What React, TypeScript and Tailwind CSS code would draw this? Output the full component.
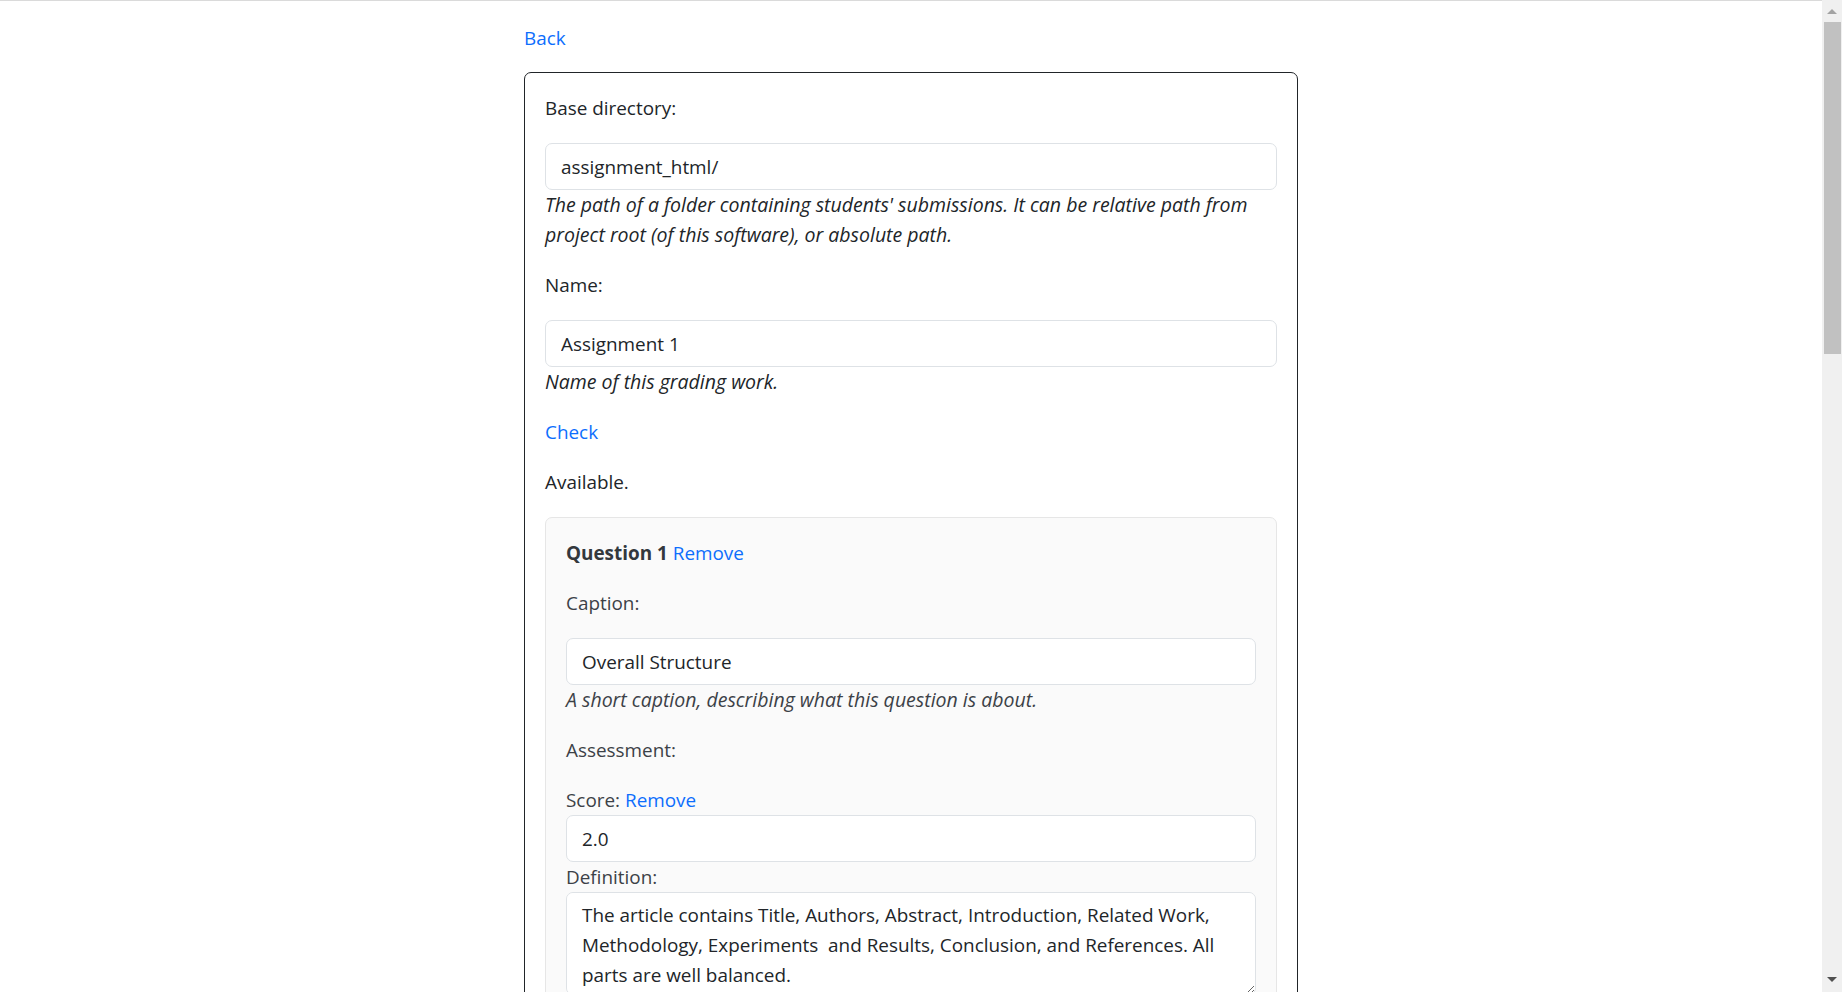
import React from "react";

const font = { fontFamily: '"Open Sans", "Noto Sans", sans-serif' };

function Field({
  label,
  value,
  help,
  labelClass = "text-[#212529]",
  helpClass = "text-[#212529]",
}: {
  label: string;
  value: string;
  help: string;
  labelClass?: string;
  helpClass?: string;
}) {
  return (
    <div className="mb-5">
      <div className={`mb-5 leading-[30px] ${labelClass}`}>{label}</div>
      <input
        readOnly
        value={value}
        className="block h-[47px] w-full rounded-[7px] border border-[#dee2e6] bg-white px-[15px] leading-[30px] text-[#212529] outline-none"
      />
      <div className={`text-[19.5px] italic leading-[30px] ${helpClass}`}>{help}</div>
    </div>
  );
}

export default function App() {
  return (
    <div
      className="flex h-[992px] w-full overflow-hidden bg-white text-[18.9px] text-[#212529]"
      style={font}
    >
      <main className="flex-1 overflow-hidden border-t border-[#dadada]">
        <div className="mx-auto w-[774px] pt-[22px]">
          <a className="mb-[19px] block w-fit leading-[30px] text-[#0d6efd]" href="#">
            Back
          </a>
          <div className="rounded-[7px] border border-[#212529] p-5">
            <Field
              label="Base directory:"
              value="assignment_html/"
              help="The path of a folder containing students' submissions. It can be relative path from project root (of this software), or absolute path."
            />
            <Field
              label="Name:"
              value="Assignment 1"
              help="Name of this grading work."
            />
            <div className="mb-5 leading-[30px]">
              <a href="#" className="text-[#0d6efd]">
                Check
              </a>
            </div>
            <div className="mb-5 leading-[30px]">Available.</div>

            <div className="rounded-[7px] border border-[#e6e6e6] bg-[#fafafa] p-5 text-[#3c4147]">
              <div className="mb-5 leading-[30px]">
                <span className="font-bold text-[#33383d]">Question 1</span>{" "}
                <a href="#" className="text-[#0d6efd]">
                  Remove
                </a>
              </div>
              <Field
                label="Caption:"
                value="Overall Structure"
                help="A short caption, describing what this question is about."
                labelClass="text-[#3c4147]"
                helpClass="text-[#3c4147]"
              />
              <div className="mb-5 leading-[30px]">Assessment:</div>
              <div className="leading-[30px]">
                Score:{" "}
                <a href="#" className="text-[#0d6efd]">
                  Remove
                </a>
              </div>
              <input
                readOnly
                value="2.0"
                className="block h-[47px] w-full rounded-[7px] border border-[#dee2e6] bg-white px-[15px] leading-[30px] text-[#212529] outline-none"
              />
              <div className="leading-[30px]">Definition:</div>
              <textarea
                readOnly
                defaultValue="The article contains Title, Authors, Abstract, Introduction, Related Work, Methodology, Experiments  and Results, Conclusion, and References. All parts are well balanced."
                className="block h-[103px] w-full rounded-[7px] border border-[#dee2e6] bg-white px-[15px] py-[7px] leading-[30px] text-[#212529] outline-none"
              />
            </div>
          </div>
        </div>
      </main>

      <div className="flex w-[20px] flex-col bg-[#f0f0f0]">
        <div className="flex h-[22px] items-start justify-center pt-[9px]">
          <svg width="10" height="6" viewBox="0 0 10 6">
            <polygon points="5,0 10,5 0,5" fill="#a3a3a3" />
          </svg>
        </div>
        <div className="ml-[2px] mr-[1px] h-[332px] bg-[#c1c1c1]" />
        <div className="flex-1" />
        <div className="flex h-[22px] items-end justify-center pb-[9px]">
          <svg width="10" height="6" viewBox="0 0 10 6">
            <polygon points="0,0 10,0 5,5" fill="#505050" />
          </svg>
        </div>
      </div>
    </div>
  );
}
